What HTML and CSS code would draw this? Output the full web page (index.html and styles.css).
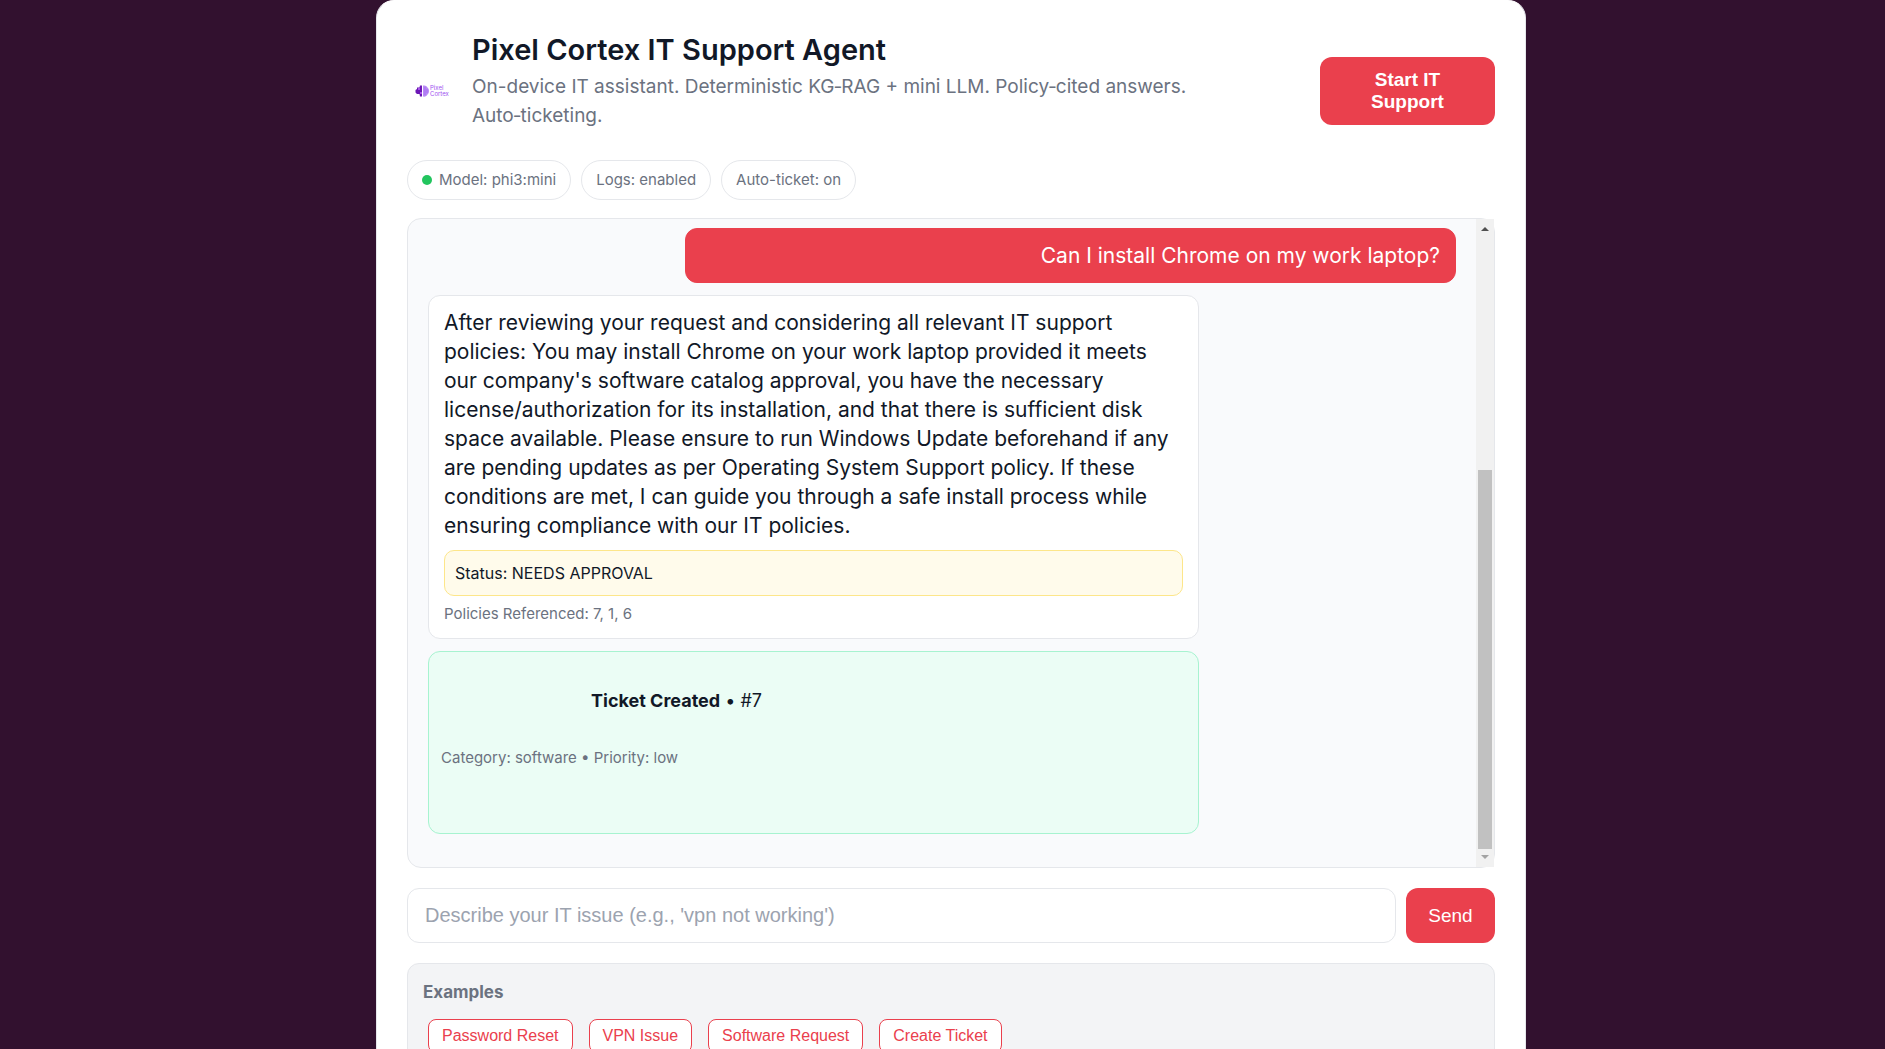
FILE: index.html
```html
<!DOCTYPE html>
<html lang="en">
<head>
<meta charset="utf-8">
<meta name="viewport" content="width=device-width, initial-scale=1">
<title>Pixel Cortex IT Support Agent</title>
<link rel="stylesheet" href="styles.css">
</head>
<body>
<main class="card">
  <header class="header">
    <svg class="logo" viewBox="0 0 50 50" role="img" aria-label="Pixel Cortex">
      <path d="M15 19.500V30.500H13L12.500 28H10L8.500 26.500V24L10 23V21.500H12.500L13 19.500Z" fill="#6b16b5"/>
      <path d="M11 22h2v2h-2zM13 26h2v2h-2z" fill="#a855e8"/>
      <path d="M16 19.500C19 19 20 20.500 20.500 21.500C22.500 23 22.500 27 20.500 28.500C20 30 18 31 16 30.500Z" fill="#b98bf5"/>
      <path d="M18 21v8M20 23v4" stroke="#9b5cf0" stroke-width=".6"/>
      <text class="logo-text" x="23" y="24">Pixel</text>
      <text class="logo-text" x="23" y="30">Cortex</text>
    </svg>
    <div class="intro">
      <h1>Pixel Cortex IT Support Agent</h1>
      <p>On-device IT assistant. Deterministic KG‑RAG + mini LLM. Policy‑cited answers.<br>Auto‑ticketing.</p>
    </div>
    <button class="start" type="button">Start IT<br>Support</button>
  </header>

  <ul class="chips">
    <li><span class="dot"></span>Model: phi3:mini</li>
    <li>Logs: enabled</li>
    <li>Auto-ticket: on</li>
  </ul>

  <section class="chat" aria-label="Conversation">
    <div class="messages">
      <div class="bubble user">Can I install Chrome on my work laptop?</div>
      <div class="bubble bot">
        <p>After reviewing your request and considering all relevant IT support<br>
        policies: You may install Chrome on your work laptop provided it meets<br>
        our company's software catalog approval, you have the necessary<br>
        license/authorization for its installation, and that there is sufficient disk<br>
        space available. Please ensure to run Windows Update beforehand if any<br>
        are pending updates as per Operating System Support policy. If these<br>
        conditions are met, I can guide you through a safe install process while<br>
        ensuring compliance with our IT policies.</p>
        <div class="status">Status: NEEDS APPROVAL</div>
        <div class="meta">Policies Referenced: 7, 1, 6</div>
      </div>
      <div class="bubble ticket">
        <div class="ticket-title"><strong>Ticket Created</strong> • #7</div>
        <div class="meta">Category: software • Priority: low</div>
      </div>
    </div>
    <div class="scrollbar" aria-hidden="true">
      <svg class="arrow" viewBox="0 0 18 18"><path d="M5 12L9 8L13 12Z" fill="#505050"/></svg>
      <div class="track"><div class="thumb"></div></div>
      <svg class="arrow" viewBox="0 0 18 18"><path d="M5 6L9 10L13 6Z" fill="#a3a3a3"/></svg>
    </div>
  </section>

  <form class="composer">
    <input type="text" aria-label="Describe your IT issue" placeholder="Describe your IT issue (e.g., 'vpn not working')">
    <button type="button">Send</button>
  </form>

  <section class="examples">
    <h2>Examples</h2>
    <div class="example-list">
      <button type="button">Password Reset</button>
      <button type="button">VPN Issue</button>
      <button type="button">Software Request</button>
      <button type="button">Create Ticket</button>
    </div>
  </section>
</main>
</body>
</html>
```
FILE: styles.css
```css
* { box-sizing: border-box; }

body {
  margin: 0;
  padding-left: 17px;
  background: #32112f;
  color: #111827;
  font-family: "Inter", "Open Sans", sans-serif;
}

h1, h2, p, ul { margin: 0; padding: 0; }

button, input { font-family: "Liberation Sans", Arial, sans-serif; }

.card {
  max-width: 1150px;
  margin: 0 auto;
  padding: 31px 30px 30px;
  background: #fff;
  border: 1px solid #e5e7eb;
  border-top-color: #fff;
  border-radius: 18px;
}

.header {
  display: flex;
  align-items: center;
  gap: 15px;
}

.logo { width: 50px; height: 50px; flex: none; }

.logo-text { font-size: 6px; fill: #a052f0; }

.intro { flex: 1; padding-bottom: 19px; }

.intro h1 {
  margin-bottom: 4px;
  font-size: 29px;
  line-height: 36px;
  font-weight: 600;
}

.intro p {
  color: #6b7280;
  font-size: 19px;
  line-height: 29px;
}

.start {
  width: 175px;
  padding: 12px;
  border: 0;
  border-radius: 12px;
  background: #ea404d;
  color: #fff;
  font-size: 19px;
  line-height: 22px;
  font-weight: 700;
}

.chips {
  display: flex;
  flex-wrap: wrap;
  gap: 10px;
  margin-top: 11px;
  list-style: none;
}

.chips li {
  display: flex;
  align-items: center;
  gap: 7px;
  padding: 7px 14px;
  border: 1px solid #e5e7eb;
  border-radius: 20px;
  color: #6b7280;
  font-size: 15px;
  line-height: 24px;
}

.dot { width: 10px; height: 10px; border-radius: 50%; background: #22c55e; }

.chat {
  display: flex;
  min-height: 650px;
  margin-top: 18px;
  border: 1px solid #e5e7eb;
  border-radius: 14px;
  background: #f9fafc;
}

.messages {
  flex: 1;
  display: flex;
  flex-direction: column;
  gap: 12px;
  padding: 9px 20px 32px;
}

.bubble {
  width: 75%;
  padding: 12px 15px;
  border: 1px solid #e5e7eb;
  border-radius: 12px;
  background: #fff;
  font-size: 21px;
  line-height: 29px;
}

.user {
  align-self: flex-end;
  background: #ea404d;
  border-color: #ea404d;
  color: #fff;
  text-align: right;
}

.status {
  margin-top: 10px;
  padding: 10px;
  border: 1px solid #fde68a;
  border-radius: 10px;
  background: #fffbeb;
  font-size: 16px;
  line-height: 24px;
}

.meta {
  margin-top: 6px;
  color: #6b7280;
  font-size: 15px;
  line-height: 24px;
}

.ticket {
  padding: 34px 12px 63px;
  border-color: #a7f3d0;
  background: #ebfdf5;
}

.ticket-title {
  margin-bottom: 31px;
  padding-left: 150px;
  font-size: 18px;
}

.ticket .meta { margin-top: 0; }

.scrollbar {
  display: flex;
  flex-direction: column;
  width: 18px;
  background: #f1f1f1;
}

.arrow { width: 18px; height: 18px; }

.track {
  flex: 1;
  display: flex;
  flex-direction: column;
  justify-content: flex-end;
  padding: 0 2px;
}

.thumb { height: 62%; background: #c1c1c1; }

.composer {
  display: flex;
  gap: 10px;
  margin-top: 20px;
}

.composer input {
  flex: 1;
  min-width: 0;
  height: 55px;
  padding: 0 17px;
  border: 1px solid #e5e7eb;
  border-radius: 12px;
  background: #fff;
  color: #111827;
  font-size: 20px;
}

.composer input::placeholder { color: #9ca3af; }

.composer button {
  width: 89px;
  border: 0;
  border-radius: 12px;
  background: #ea404d;
  color: #fff;
  font-size: 19px;
}

.examples {
  margin-top: 20px;
  padding: 15px;
  border: 1px solid #e5e7eb;
  border-radius: 12px;
  background: #f3f4f6;
}

.examples h2 {
  color: #6b7280;
  font-size: 17px;
  line-height: 26px;
}

.example-list {
  display: flex;
  flex-wrap: wrap;
  gap: 16px;
  padding: 14px 5px 5px;
}

.example-list button {
  padding: 6px 13px;
  border: 1px solid #ea404d;
  border-radius: 8px;
  background: #fff;
  color: #ea404d;
  font-size: 16px;
  line-height: 20px;
}
```
